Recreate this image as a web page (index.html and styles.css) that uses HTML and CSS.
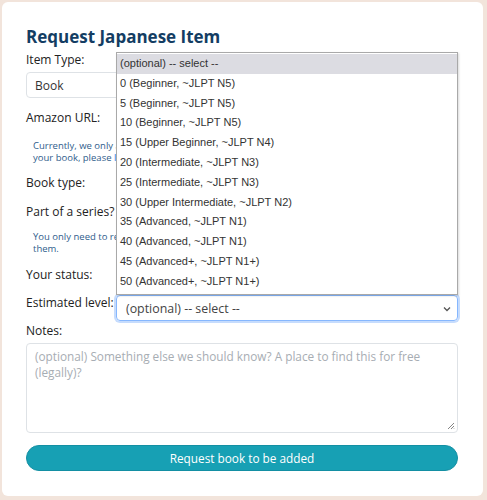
FILE: index.html
```html
<!DOCTYPE html>
<html lang="en">
<head>
<meta charset="utf-8">
<title>Request Japanese Item</title>
<link rel="stylesheet" href="styles.css">
</head>
<body>
<div class="card">
  <h1 class="title">Request Japanese Item</h1>
  <form class="form">
    <div class="stack">
      <label class="label">Item Type:</label>
      <div class="control"><span>Book</span></div>
    </div>
    <div class="row">
      <label class="label">Amazon URL:</label>
      <div class="control"></div>
    </div>
    <p class="help first">Currently, we only accept Amazon links. If you can't find an Amazon page for<br>your book, please <a href="#">let us know</a> in the notes.</p>
    <div class="row after-first">
      <label class="label">Book type:</label>
      <div class="control"></div>
    </div>
    <div class="row tight">
      <label class="label">Part of a series?</label>
      <div class="control"></div>
    </div>
    <p class="help">You only need to request the first volume; we will add the others when readers request<br>them.</p>
    <div class="row">
      <label class="label">Your status:</label>
      <div class="control"></div>
    </div>
    <div class="row level">
      <label class="label">Estimated level:</label>
      <div class="control focus"><span>(optional) -- select --</span>
        <svg class="chev" width="8" height="6" viewBox="0 0 8 6"><path d="M1 1.5 L4 4.5 L7 1.5" fill="none" stroke="#555" stroke-width="1.3"/></svg>
      </div>
    </div>
    <div class="stack notes">
      <label class="label">Notes:</label>
      <div class="textarea"><span class="ph">(optional) Something else we should know? A place to find this for free (legally)?</span>
        <svg class="grip" width="8" height="8" viewBox="0 0 8 8"><path d="M7 1 L1 7 M7 4 L4 7 M7 6.5 L6.5 7" stroke="#777" stroke-width="0.9"/></svg>
      </div>
    </div>
    <button type="button" class="btn">Request book to be added</button>

    <ul class="popup">
      <li class="hl">(optional) -- select --</li>
      <li>0 (Beginner, ~JLPT N5)</li>
      <li>5 (Beginner, ~JLPT N5)</li>
      <li>10 (Beginner, ~JLPT N5)</li>
      <li>15 (Upper Beginner, ~JLPT N4)</li>
      <li>20 (Intermediate, ~JLPT N3)</li>
      <li>25 (Intermediate, ~JLPT N3)</li>
      <li>30 (Upper Intermediate, ~JLPT N2)</li>
      <li>35 (Advanced, ~JLPT N1)</li>
      <li>40 (Advanced, ~JLPT N1)</li>
      <li>45 (Advanced+, ~JLPT N1+)</li>
      <li>50 (Advanced+, ~JLPT N1+)</li>
    </ul>
  </form>
</div>
</body>
</html>
```
FILE: styles.css
```css
html, body {
  margin: 0;
  padding: 0;
}
body {
  background: #f2e4db;
  padding: 2px 4px 4px 2px;
  font-family: "Open Sans", "Noto Sans", sans-serif;
  color: #222;
}
.card {
  background: #ffffff;
  border-radius: 6px;
  padding: 24px 25px 25px 24px;
  height: 494px;
  box-sizing: border-box;
}
.title {
  margin: 0;
  font-size: 17px;
  font-weight: 700;
  color: #133d63;
  line-height: 21px;
}
.form {
  position: relative;
  display: flex;
  flex-direction: column;
}
.label {
  font-size: 12px;
  color: #222;
  line-height: 16px;
  white-space: nowrap;
}
.stack {
  display: flex;
  flex-direction: column;
}
.stack .label {
  margin-top: 5px;
  margin-bottom: 4px;
}
.control {
  height: 26px;
  box-sizing: border-box;
  border: 1px solid #dee2e6;
  border-radius: 4px;
  display: flex;
  align-items: center;
  padding-left: 8px;
  font-size: 12px;
  color: #333;
  position: relative;
}
.row {
  display: grid;
  grid-template-columns: 90px 1fr;
  align-items: center;
  margin-top: 7px;
}
.row.tight {
  margin-top: 3px;
}
.row.after-first {
  margin-top: 6px;
}
.help {
  margin: 6px 0 0 7px;
  font-size: 9.5px;
  line-height: 12px;
  color: #2f5d8c;
  white-space: nowrap;
}
.help.first {
  margin-top: 9px;
}
.help a {
  color: #2a7ae2;
  text-decoration: none;
}
.level {
  align-items: start;
}
.focus {
  border: 1px solid #86b7fe;
  box-shadow: 0 0 0 2px #c6dcfd;
  padding-left: 9px;
  font-size: 12.4px;
  color: #444;
}
.chev {
  position: absolute;
  right: 6px;
  top: 10px;
}
.notes .label {
  margin-top: 2px;
  margin-bottom: 4px;
}
.textarea {
  height: 90px;
  box-sizing: border-box;
  border: 1px solid #dee2e6;
  border-radius: 4px;
  padding: 4px 8px;
  font-size: 11.8px;
  line-height: 16px;
  position: relative;
}
.ph {
  color: #a7adb3;
}
.grip {
  position: absolute;
  right: 2px;
  bottom: 2px;
}
.btn {
  margin-top: 12px;
  height: 26px;
  border: 1px solid #138fa3;
  border-radius: 13px;
  background: #17a0b4;
  color: #ffffff;
  font-family: inherit;
  font-size: 11.8px;
}
.popup {
  position: absolute;
  left: 90px;
  top: 5px;
  width: 342px;
  margin: 0;
  padding: 1px 0 2px;
  list-style: none;
  background: #ffffff;
  border: 1px solid #a9a9a9;
  box-sizing: border-box;
  box-shadow: 1px 1px 2px rgba(0,0,0,0.15);
  font-family: "Liberation Sans", Arial, sans-serif;
  font-size: 11px;
  color: #333;
}
.popup li {
  height: 19.8px;
  line-height: 19.8px;
  padding-left: 3px;
}
.popup .hl {
  background: #dcdce2;
}
```
